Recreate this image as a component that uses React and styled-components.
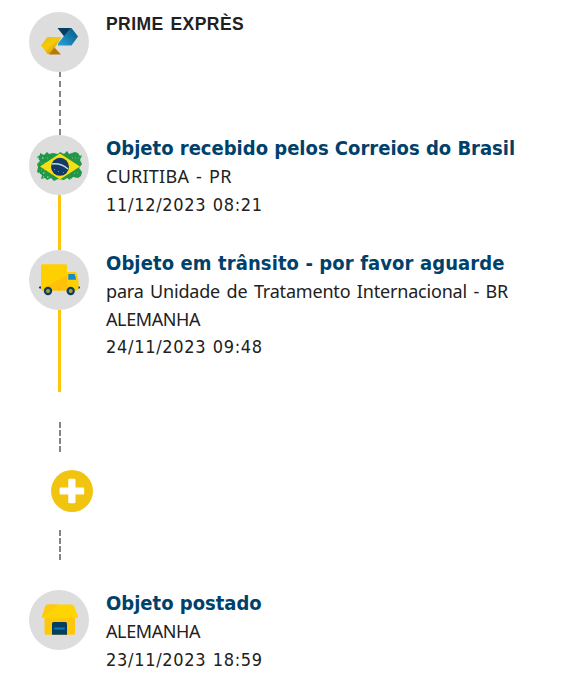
import React from "react";
import styled, { createGlobalStyle } from "styled-components";

const GlobalStyle = createGlobalStyle`
  body { margin: 0; background: #fff; }
`;

const Timeline = styled.main`
  box-sizing: border-box;
  width: 567px;
  height: 692px;
  padding: 12px 0 0 29px;
  overflow: hidden;
  color: #212121;
`;

const Step = styled.section`
  display: grid;
  grid-template-columns: 60px 1fr;
  column-gap: 17px;
  height: ${(p) => p.$height}px;
`;

const Rail = styled.div`
  display: flex;
  flex-direction: column;
  align-items: center;
`;

const Badge = styled.div`
  flex: none;
  width: 60px;
  height: 60px;
  border-radius: 50%;
  background: #ddd;
  svg { display: block; }
`;

const SolidLine = styled.div`
  flex: 1;
  width: 3px;
  margin-left: 1px;
  background: #ffc40c;
`;

const DashedLine = styled.div`
  flex: 1;
  width: 2px;
  margin-left: 2px;
  background: repeating-linear-gradient(
    to top, #858585 0 6px, transparent 6px ${(p) => p.$period}px
  );
`;

const Gap = styled.div`
  display: flex;
  justify-content: center;
  width: 60px;
  height: 30px;
  margin: ${(p) => p.$margin};
`;

const GapDash = styled.div`
  width: 2px;
  margin-left: 2px;
  background: repeating-linear-gradient(to bottom, #858585 0 6px, transparent 6px 8px);
`;

const More = styled.button`
  display: block;
  width: 42px;
  height: 42px;
  margin: 18px 0 18px 22px;
  padding: 0;
  border: 0;
  border-radius: 50%;
  background: #f1c40f;
  svg { display: block; }
`;

const Details = styled.div`
  white-space: nowrap;
`;

const Service = styled.h1`
  margin: 0;
  font: bold 17.5px/24px "Liberation Sans", Arial, sans-serif;
  letter-spacing: 0.45px;
  word-spacing: 1.5px;
`;

const Title = styled.h2`
  margin: 0;
  padding-bottom: 2px;
  font-family: "DejaVu Sans Condensed", "DejaVu Sans", sans-serif;
  font-stretch: condensed;
  font-weight: bold;
  font-size: 20px;
  line-height: 26px;
  letter-spacing: ${(p) => p.$spacing ?? 0}px;
  color: #00416b;
`;

const Place = styled.p`
  margin: 0;
  font-family: "Noto Sans", sans-serif;
  font-size: 18px;
  line-height: 27.5px;
  letter-spacing: ${(p) => p.$spacing ?? 0}px;
  word-spacing: 2px;
`;

const Time = styled.p`
  margin: 0;
  font-family: "DejaVu Sans Condensed", "DejaVu Sans", sans-serif;
  font-stretch: condensed;
  font-size: 18px;
  line-height: 27px;
  letter-spacing: 0.7px;
  word-spacing: 0.5px;
`;

const Logo = () => (
  <svg width="60" height="60" viewBox="0 0 60 60">
    <defs>
      <linearGradient id="gold" x1="0" y1="0" x2="1" y2="1">
        <stop offset="0" stopColor="#e8b80d" />
        <stop offset=".45" stopColor="#f6cc09" />
        <stop offset="1" stopColor="#bd7d0c" />
      </linearGradient>
      <linearGradient id="blue" x1="0" y1="1" x2="1" y2="0">
        <stop offset="0" stopColor="#24a5dd" />
        <stop offset="1" stopColor="#07527f" />
      </linearGradient>
    </defs>
    <path d="M18.5 25H32.5L22 42H18.5L12 33.5Z" fill="url(#gold)" />
    <path d="M20 42.5L25.5 35.5L32 42.5Z" fill="#b9780d" />
    <path d="M28.5 16H42L36 25.5Z" fill="#043d60" />
    <path d="M41.5 16H42.5L49 24.5L42.5 33.5H29V31.5Z" fill="url(#blue)" />
  </svg>
);

const Flag = () => (
  <svg width="60" height="60" viewBox="0 0 60 60">
    <path d="M8 22L11 20L11 18L15 20L18 17L20 19L24 18L29 19L31 17L35 19L38 16L40 19L46 17L49 18L51 21L53 20L51 25L53 29L50 33L53 37L52 41L49 43L44 42L41 45L38 43L35 45L29 44L25 46L22 43L18 45L16 43L12 44L13 40L8 37L9 32L8 29L11 26Z" fill="#219747" />
    <path d="M9 23H19M10 38H17M14 42H22M41 44H46" stroke="#cde3d1" strokeWidth="1.2" strokeDasharray="1 3 1.5 4" />
    <path d="M9 28H16M12 35H17M43 23H50M45 38H50" stroke="#55ad6d" strokeWidth="1.5" strokeDasharray="1 2" />
    <path d="M11 31.5L31 18.5L51 31.5L31 44.5Z" fill="#f9df12" />
    <circle cx="31" cy="31.8" r="9" fill="#123968" />
    <path d="M23 29Q32 28 39 34" fill="none" stroke="#b9dedb" strokeWidth="1.5" />
    <path d="M25 34L26 35M29 36L30 37M34 37L35 38" stroke="#7190aa" strokeWidth="1" />
  </svg>
);

const Truck = () => (
  <svg width="60" height="60" viewBox="0 0 60 60">
    <ellipse cx="12.5" cy="37.5" rx="2.7" ry="1.3" fill="#103f56" />
    <ellipse cx="48.5" cy="37.5" rx="2.7" ry="1.3" fill="#103f56" />
    <rect x="12" y="14.2" width="26" height="26.3" rx="1.5" fill="#ffd000" />
    <path d="M38 25V40.5H14Q12 40 12.5 39.5Z" fill="#ffbf0b" />
    <path d="M38 22H46Q48 22 48.3 25L49.5 31V38Q49.5 40.5 47.5 40.5H38Z" fill="#ffcf00" />
    <path d="M40 24H45.5Q47 27 47 29.8H39.3V24.6Z" fill="#168acb" />
    <circle cx="19" cy="41" r="4.2" fill="#07405f" />
    <circle cx="19" cy="41" r="2" fill="#b89534" />
    <circle cx="41.7" cy="41" r="4.2" fill="#07405f" />
    <circle cx="41.7" cy="41" r="2" fill="#b89534" />
  </svg>
);

const Store = () => (
  <svg width="60" height="60" viewBox="0 0 60 60">
    <path d="M15.5 27H46V43Q46 44.7 44.3 44.7H17Q15.5 44.7 15.5 43Z" fill="#ffc70c" />
    <path d="M18 14.5H43Q44.5 14.5 45 16L49 26Q49.5 28 47.5 28H14Q12 28 13 26L16.5 16Q17 14.5 18 14.5Z" fill="#ffd400" />
    <path d="M17 15L23.5 20L13 27L16.5 16Z" fill="#ffca0a" />
    <path d="M18 14.5H29L23.5 20Z" fill="#ffc51a" />
    <path d="M23 33.5Q23 32 24.5 32H36.5Q38 32 38 33.5V44.7H23Z" fill="#063e60" />
    <path d="M26 38.5H35" stroke="#087bc0" strokeWidth="2" strokeLinecap="round" />
  </svg>
);

const Plus = () => (
  <svg width="42" height="42" viewBox="0 0 42 42">
    <path d="M18.5 8.8H23.3Q24.5 8.8 24.5 10V17.5H32Q33.2 17.5 33.2 18.7V23.3Q33.2 24.5 32 24.5H24.5V32Q24.5 33.2 23.3 33.2H18.5Q17.3 33.2 17.3 32V24.5H9.8Q8.6 24.5 8.6 23.3V18.7Q8.6 17.5 9.8 17.5H17.3V10Q17.3 8.8 18.5 8.8Z" fill="#fff" />
  </svg>
);

export default function App() {
  return (
    <>
      <GlobalStyle />
      <Timeline>
        <Step $height={123}>
          <Rail><Badge><Logo /></Badge><DashedLine $period={9.6} /></Rail>
          <Details><Service>PRIME EXPRÈS</Service></Details>
        </Step>
        <Step $height={115}>
          <Rail><Badge><Flag /></Badge><SolidLine /></Rail>
          <Details>
            <Title>Objeto recebido pelos Correios do Brasil</Title>
            <Place $spacing={0.25}>CURITIBA - PR</Place>
            <Time>11/12/2023 08:21</Time>
          </Details>
        </Step>
        <Step $height={142}>
          <Rail><Badge><Truck /></Badge><SolidLine /></Rail>
          <Details>
            <Title $spacing={0.1}>Objeto em trânsito - por favor aguarde</Title>
            <Place $spacing={-0.19}>para Unidade de Tratamento Internacional - BR</Place>
            <Place $spacing={-0.4}>ALEMANHA</Place>
            <Time>24/11/2023 09:48</Time>
          </Details>
        </Step>
        <Gap $margin="30px 0 0"><GapDash /></Gap>
        <More aria-label="+"><Plus /></More>
        <Gap $margin="0 0 30px"><GapDash /></Gap>
        <Step $height={90}>
          <Rail><Badge><Store /></Badge></Rail>
          <Details>
            <Title>Objeto postado</Title>
            <Place $spacing={-0.4}>ALEMANHA</Place>
            <Time>23/11/2023 18:59</Time>
          </Details>
        </Step>
      </Timeline>
    </>
  );
}
